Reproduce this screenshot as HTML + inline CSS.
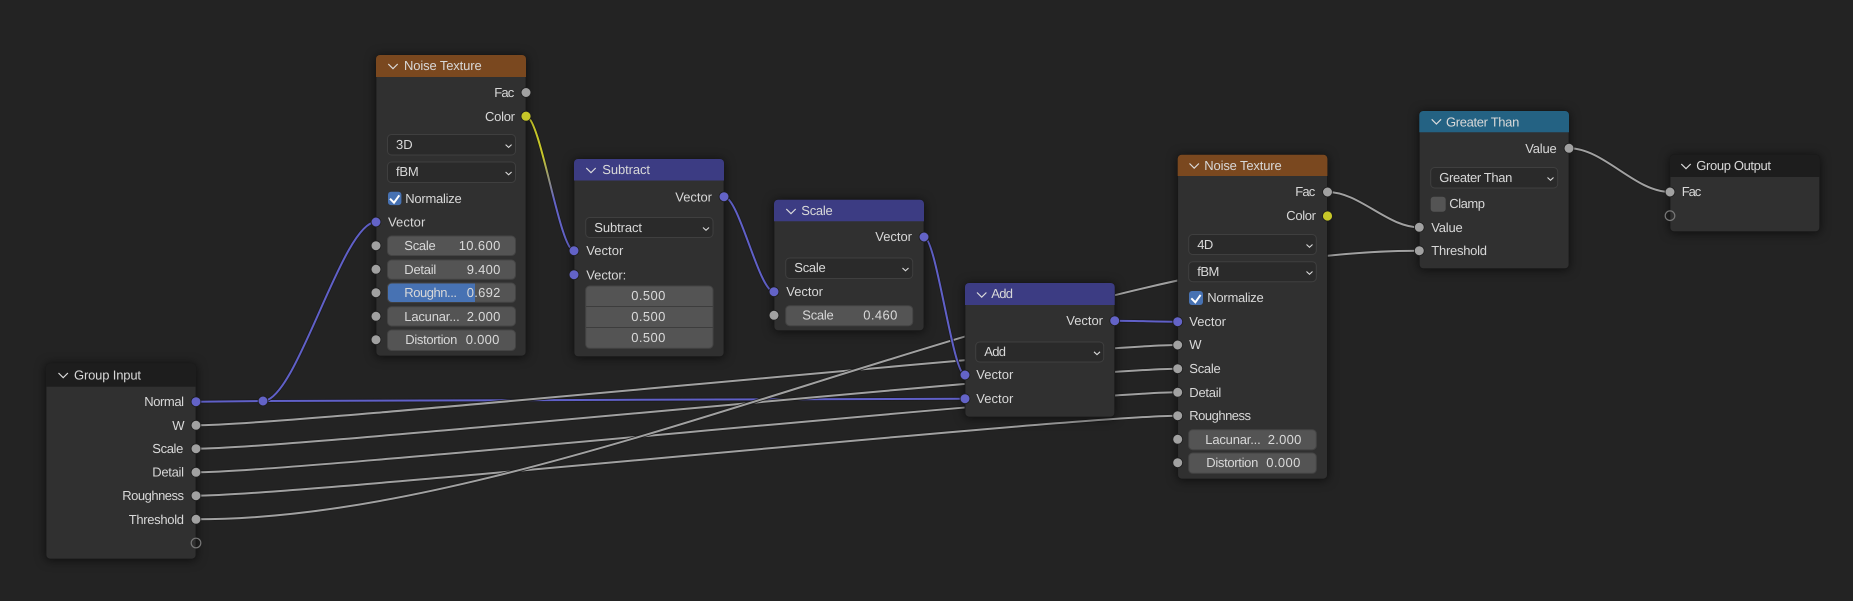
<!DOCTYPE html>
<html><head><meta charset="utf-8"><style>
html,body{margin:0;padding:0;background:#232323;width:1853px;height:601px;overflow:hidden}
svg{display:block}
text{font-family:"Liberation Sans",sans-serif;font-size:13px;fill:#d8d8d8;text-rendering:geometricPrecision}
.n{filter:drop-shadow(0 1px 5px rgba(0,0,0,.6))}
.b{fill:#303030;stroke:#191919;stroke-width:.8}
.o{fill:none;stroke:#1b1b1b;stroke-width:3.6}
.g{fill:none;stroke:#a1a1a1;stroke-width:2}
.v{fill:none;stroke:#6060c8;stroke-width:2}
.d{fill:#2a2a2a;stroke:#3f3f3f;stroke-width:1}
.f{fill:#545454;stroke:#444;stroke-width:1}
.c,.h{fill:none;stroke:#dcdcdc}
.c{stroke-width:1.1}.h{stroke-width:1.2}
.sg{fill:#a1a1a1;stroke:#1d1d1d;stroke-width:.8}
.sv{fill:#6363c7;stroke:#1d1d1d;stroke-width:.8}
.sy{fill:#c7c729;stroke:#1d1d1d;stroke-width:.8}
.se{fill:none;stroke:#777;stroke-width:1.2}
</style></head><body>
<svg width="1853" height="601" viewBox="0 0 1853 601" xmlns="http://www.w3.org/2000/svg">
<defs><linearGradient id="yb" gradientUnits="userSpaceOnUse" x1="526" y1="116" x2="574" y2="251"><stop offset=".3" stop-color="#c7c729"/><stop offset=".62" stop-color="#6363c7"/></linearGradient></defs>
<rect width="1853" height="601" fill="#232323"/>

<!-- wires -->
<path class="o" d="M263 401C473 401 755 398.7 965 398.7"/><path class="v" d="M263 401C473 401 755 398.7 965 398.7"/>
<path class="o" d="M196 401.7L263 401"/><path class="v" d="M196 401.7L263 401"/>
<path class="o" d="M263 401C296.9 401 342.1 222 376 222"/><path class="v" d="M263 401C296.9 401 342.1 222 376 222"/>
<path class="o" d="M196 425.3C294 425.3 1079.5 345 1177.7 345"/><path class="g" d="M196 425.3C294 425.3 1079.5 345 1177.7 345"/>
<path class="o" d="M196 448.7C294 448.7 1079.5 368.7 1177.7 368.7"/><path class="g" d="M196 448.7C294 448.7 1079.5 368.7 1177.7 368.7"/>
<path class="o" d="M196 472.3C294 472.3 1079.5 392.3 1177.7 392.3"/><path class="g" d="M196 472.3C294 472.3 1079.5 392.3 1177.7 392.3"/>
<path class="o" d="M196 495.7C294 495.7 1079.5 415.7 1177.7 415.7"/><path class="g" d="M196 495.7C294 495.7 1079.5 415.7 1177.7 415.7"/>
<path class="o" d="M196 519.3C563 519.3 1052.3 250.7 1419.3 250.7"/><path class="g" d="M196 519.3C563 519.3 1052.3 250.7 1419.3 250.7"/>
<path class="o" d="M526 116.3C540.4 116.3 559.6 250.7 574 250.7"/><path fill="none" stroke="url(#yb)" stroke-width="2" d="M526 116.3C540.4 116.3 559.6 250.7 574 250.7"/>
<path class="o" d="M724 196.7C739 196.7 759 291.7 774 291.7"/><path class="v" d="M724 196.7C739 196.7 759 291.7 774 291.7"/>
<path class="o" d="M924 237C936.3 237 952.7 375 965 375"/><path class="v" d="M924 237C936.3 237 952.7 375 965 375"/>
<path class="o" d="M1114.7 320.7C1133 320.7 1159 321.7 1177.7 321.7"/><path class="v" d="M1114.7 320.7C1133 320.7 1159 321.7 1177.7 321.7"/>
<path class="o" d="M1327.5 192C1359.5 192 1387.3 227.3 1419.3 227.3"/><path class="g" d="M1327.5 192C1359.5 192 1387.3 227.3 1419.3 227.3"/>
<path class="o" d="M1569 148.3C1604 148.3 1635 192 1670 192"/><path class="g" d="M1569 148.3C1604 148.3 1635 192 1670 192"/>
<circle class="sv" cx="263" cy="401" r="4.9"/>

<!-- Noise Texture 1 -->
<g class="n"><rect class="b" x="376" y="55" width="150" height="301" rx="4"/>
<path fill="#7a481f" d="M376 77V59a4 4 0 0 1 4-4H522a4 4 0 0 1 4 4V77Z"/></g>
<path class="h" d="M388.3 64L393 68.7L397.7 64"/>
<text x="404" y="70" textLength="77.7">Noise Texture</text>
<text x="494.3" y="97" textLength="20">Fac</text>
<text x="485" y="121" textLength="30">Color</text>
<rect class="d" x="387.5" y="134.5" width="128" height="20.5" rx="4"/><text x="396" y="149" textLength="16.7">3D</text><path class="c" d="M505.6 144.6L508.6 147.4L511.6 144.6"/>
<rect class="d" x="387.5" y="162" width="128" height="20.5" rx="4"/><text x="396" y="176" textLength="22.7">fBM</text><path class="c" d="M505.6 172L508.6 174.8L511.6 172"/>
<rect x="388" y="191.7" width="13.4" height="13.4" rx="3" fill="#4772b3"/><path d="M390 198.7L394 202.7L399.3 195.3" fill="none" stroke="#fff" stroke-width="2"/>
<text x="405.3" y="203" textLength="56.4">Normalize</text>
<text x="388" y="226.3" textLength="37.3">Vector</text>
<rect class="f" x="387.5" y="236" width="128" height="19.5" rx="4"/><text x="404.3" y="250" textLength="31.4">Scale</text><text x="458.7" y="250" textLength="41.6">10.600</text>
<rect class="f" x="387.5" y="260" width="128" height="19.3" rx="4"/><text x="404.3" y="274" textLength="32">Detail</text><text x="466.7" y="274" textLength="33.6">9.400</text>
<rect class="f" x="387.5" y="283" width="128" height="19.3" rx="4"/><path fill="#4772b3" d="M475 283.5H392a4 4 0 0 0-4 4V298a4 4 0 0 0 4 4H475Z"/><text x="404.3" y="297" textLength="52.7">Roughn...</text><text x="466.7" y="297" textLength="33.6">0.692</text>
<rect class="f" x="387.5" y="306.7" width="128" height="19.3" rx="4"/><text x="404.3" y="321" textLength="55.4">Lacunar...</text><text x="466.7" y="321" textLength="33.6">2.000</text>
<rect class="f" x="387.5" y="330" width="128" height="20.5" rx="4"/><text x="405.3" y="344" textLength="52">Distortion</text><text x="465.7" y="344" textLength="33.6">0.000</text>
<circle class="sg" cx="526" cy="92.5" r="4.9"/><circle class="sy" cx="526" cy="116.2" r="5"/><circle class="sv" cx="376" cy="222" r="4.9"/>
<circle class="sg" cx="376" cy="245.7" r="4.9"/><circle class="sg" cx="376" cy="269.3" r="4.9"/><circle class="sg" cx="376" cy="292.7" r="4.9"/><circle class="sg" cx="376" cy="316.3" r="4.9"/><circle class="sg" cx="376" cy="339.7" r="4.9"/>

<!-- Subtract -->
<g class="n"><rect class="b" x="574" y="159" width="150" height="197.7" rx="4"/>
<path fill="#3c3c83" d="M574 180.5V163a4 4 0 0 1 4-4H720a4 4 0 0 1 4 4V180.5Z"/></g>
<path class="h" d="M586.3 168L591 172.7L595.7 168"/>
<text x="602.3" y="174" textLength="47.7">Subtract</text>
<text x="675.3" y="201.3" textLength="36.7">Vector</text>
<rect class="d" x="585.7" y="217.5" width="127.3" height="20" rx="4"/><text x="594.3" y="232" textLength="47.7">Subtract</text><path class="c" d="M703 227.5L706 230.3L709 227.5"/>
<text x="586.3" y="255" textLength="37">Vector</text>
<text x="586.3" y="279.3" textLength="40">Vector:</text>
<rect class="f" x="585.7" y="286" width="127.3" height="62.3" rx="4"/>
<path stroke="#3d3d3d" d="M586 306.5H713M586 327.5H713"/>
<text x="631.3" y="300" textLength="34">0.500</text><text x="631.3" y="321" textLength="34">0.500</text><text x="631.3" y="342" textLength="34">0.500</text>
<circle class="sv" cx="724" cy="196.7" r="4.9"/><circle class="sv" cx="574" cy="250.7" r="4.9"/><circle class="sv" cx="574" cy="274.7" r="4.9"/>

<!-- Scale -->
<g class="n"><rect class="b" x="774" y="199.7" width="150" height="131" rx="4"/>
<path fill="#3c3c83" d="M774 221.3V203.7a4 4 0 0 1 4-4H920a4 4 0 0 1 4 4V221.3Z"/></g>
<path class="h" d="M786.3 209L791 213.7L795.7 209"/>
<text x="801.3" y="215" textLength="31.4">Scale</text>
<text x="875.3" y="241" textLength="36.7">Vector</text>
<rect class="d" x="785.7" y="258" width="127" height="20.5" rx="4"/><text x="794.3" y="272" textLength="31.4">Scale</text><path class="c" d="M902.5 268L905.5 270.8L908.5 268"/>
<text x="786.3" y="296" textLength="36.7">Vector</text>
<rect class="f" x="785.7" y="305.7" width="127" height="20" rx="4"/><text x="802.3" y="319.7" textLength="31.4">Scale</text><text x="863.3" y="319.7" textLength="34">0.460</text>
<circle class="sv" cx="924" cy="237" r="4.9"/><circle class="sv" cx="774" cy="291.7" r="4.9"/><circle class="sg" cx="774" cy="315.3" r="4.9"/>

<!-- Add -->
<g class="n"><rect class="b" x="965" y="283" width="149.7" height="134" rx="4"/>
<path fill="#3c3c83" d="M965 305V287a4 4 0 0 1 4-4H1110.7a4 4 0 0 1 4 4V305Z"/></g>
<path class="h" d="M977 292.5L981.7 297.2L986.4 292.5"/>
<text x="991.3" y="298" textLength="21.7">Add</text>
<text x="1066.3" y="325" textLength="36.7">Vector</text>
<rect class="d" x="975.7" y="342" width="128" height="20" rx="4"/><text x="984.3" y="356" textLength="21.7">Add</text><path class="c" d="M1094 351.8L1097 354.6L1100 351.8"/>
<text x="976.3" y="379" textLength="37">Vector</text>
<text x="976.3" y="403" textLength="37">Vector</text>
<circle class="sv" cx="1114.7" cy="320.7" r="4.9"/><circle class="sv" cx="965" cy="375" r="4.9"/><circle class="sv" cx="965" cy="398.7" r="4.9"/>

<!-- Noise Texture 2 -->
<g class="n"><rect class="b" x="1177.7" y="154.7" width="149.7" height="324.3" rx="4"/>
<path fill="#7a481f" d="M1177.7 176V158.7a4 4 0 0 1 4-4H1323.4a4 4 0 0 1 4 4V176Z"/></g>
<path class="h" d="M1189.5 163.5L1194.2 168.2L1198.9 163.5"/>
<text x="1204.3" y="170" textLength="77.4">Noise Texture</text>
<text x="1295.3" y="196" textLength="20">Fac</text>
<text x="1286.3" y="220" textLength="29.7">Color</text>
<rect class="d" x="1188.7" y="234.5" width="127.6" height="20" rx="4"/><text x="1197.3" y="249" textLength="16">4D</text><path class="c" d="M1306.5 244.5L1309.5 247.3L1312.5 244.5"/>
<rect class="d" x="1188.7" y="261.7" width="127.6" height="20" rx="4"/><text x="1197.3" y="276" textLength="22">fBM</text><path class="c" d="M1306.5 271.5L1309.5 274.3L1312.5 271.5"/>
<rect x="1189" y="291" width="14" height="14" rx="3" fill="#4772b3"/><path d="M1191.3 298.3L1195.3 302.3L1200.6 294.9" fill="none" stroke="#fff" stroke-width="2"/>
<text x="1207.3" y="302" textLength="56.4">Normalize</text>
<text x="1189.3" y="326" textLength="36.7">Vector</text>
<text x="1189.3" y="349" textLength="10.7">W</text>
<text x="1189.3" y="373" textLength="31.4">Scale</text>
<text x="1189.3" y="397" textLength="32">Detail</text>
<text x="1189.3" y="420" textLength="61.7">Roughness</text>
<rect class="f" x="1188.7" y="429.7" width="127.6" height="20" rx="4"/><text x="1205.3" y="444" textLength="55.4">Lacunar...</text><text x="1267.7" y="444" textLength="33.6">2.000</text>
<rect class="f" x="1188.7" y="453" width="127.6" height="20.3" rx="4"/><text x="1206.3" y="467" textLength="52">Distortion</text><text x="1266.3" y="467" textLength="34">0.000</text>
<circle class="sg" cx="1327.5" cy="192" r="4.9"/><circle class="sy" cx="1327.5" cy="216" r="5"/><circle class="sv" cx="1177.7" cy="321.7" r="4.9"/>
<circle class="sg" cx="1177.7" cy="345" r="4.9"/><circle class="sg" cx="1177.7" cy="368.7" r="4.9"/><circle class="sg" cx="1177.7" cy="392.3" r="4.9"/><circle class="sg" cx="1177.7" cy="415.7" r="4.9"/><circle class="sg" cx="1177.7" cy="439.3" r="4.9"/><circle class="sg" cx="1177.7" cy="462.7" r="4.9"/>

<!-- Greater Than -->
<g class="n"><rect class="b" x="1419.3" y="111" width="149.7" height="157.7" rx="4"/>
<path fill="#246283" d="M1419.3 132.3V115a4 4 0 0 1 4-4H1565a4 4 0 0 1 4 4V132.3Z"/></g>
<path class="h" d="M1431.7 119.3L1436.4 124L1441.1 119.3"/>
<text x="1446" y="126.3" textLength="73.3">Greater Than</text>
<text x="1525.3" y="153" textLength="31.4">Value</text>
<rect class="d" x="1430.7" y="167.5" width="127" height="20.5" rx="4"/><text x="1439.3" y="182" textLength="73">Greater Than</text><path class="c" d="M1547.5 177.5L1550.5 180.3L1553.5 177.5"/>
<rect x="1430.7" y="196.7" width="15" height="15" rx="3" fill="#545454"/>
<text x="1449.3" y="208" textLength="35.7">Clamp</text>
<text x="1431.3" y="232" textLength="31.4">Value</text>
<text x="1431.3" y="255" textLength="55.7">Threshold</text>
<circle class="sg" cx="1569" cy="148.3" r="4.9"/><circle class="sg" cx="1419.3" cy="227.3" r="4.9"/><circle class="sg" cx="1419.3" cy="250.7" r="4.9"/>

<!-- Group Input -->
<g class="n"><rect class="b" x="46" y="363.3" width="150" height="195.7" rx="4"/>
<path fill="#1d1d1d" d="M46 386.7V367.3a4 4 0 0 1 4-4H192a4 4 0 0 1 4 4V386.7Z"/></g>
<path class="h" d="M58.5 373L63.2 377.7L67.9 373"/>
<text x="74" y="379.3" textLength="67">Group Input</text>
<text x="144.3" y="406" textLength="39.7">Normal</text>
<text x="172.3" y="430" textLength="11">W</text>
<text x="152.3" y="453" textLength="31">Scale</text>
<text x="152.3" y="476.7" textLength="31.7">Detail</text>
<text x="122.3" y="500" textLength="61.7">Roughness</text>
<text x="128.7" y="524" textLength="55.3">Threshold</text>
<circle class="sv" cx="196" cy="401.7" r="4.9"/><circle class="sg" cx="196" cy="425.3" r="4.9"/><circle class="sg" cx="196" cy="448.7" r="4.9"/><circle class="sg" cx="196" cy="472.3" r="4.9"/><circle class="sg" cx="196" cy="495.7" r="4.9"/><circle class="sg" cx="196" cy="519.3" r="4.9"/><circle class="se" cx="196" cy="543" r="4.8"/>

<!-- Group Output -->
<g class="n"><rect class="b" x="1670" y="154.7" width="149.7" height="77" rx="4"/>
<path fill="#1d1d1d" d="M1670 177V158.7a4 4 0 0 1 4-4H1815.7a4 4 0 0 1 4 4V177Z"/></g>
<path class="h" d="M1681.3 164L1686 168.7L1690.7 164"/>
<text x="1696.3" y="170" textLength="74.7">Group Output</text>
<text x="1681.7" y="196" textLength="19.6">Fac</text>
<circle class="sg" cx="1670" cy="192" r="4.9"/><circle class="se" cx="1670" cy="215.7" r="4.8"/>
</svg>
</body></html>
